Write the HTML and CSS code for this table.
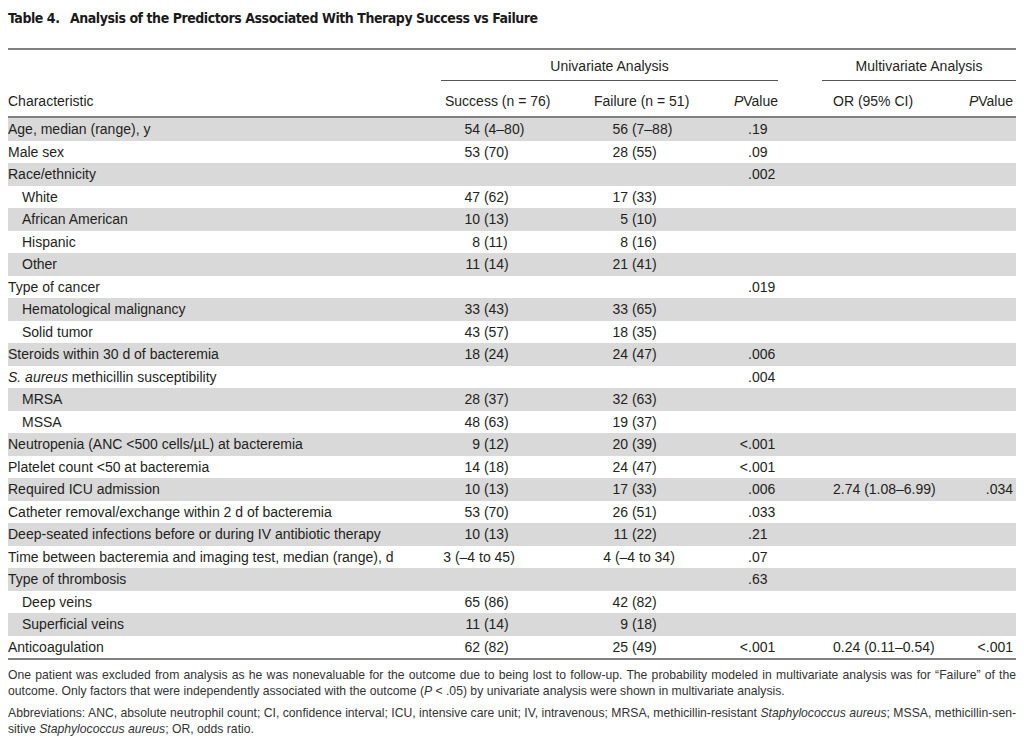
FILE: index.html
```html
<!DOCTYPE html>
<html lang="en">
<head>
<meta charset="utf-8">
<title>Table 4</title>
<link rel="stylesheet" href="styles.css">
</head>
<body>
<div class="page">
  <h1 class="title"><span class="tnum">Table 4.</span>Analysis of the Predictors Associated With Therapy Success vs Failure</h1>

  <div class="table">
    <div class="row group">
      <div class="grp uni">Univariate Analysis</div>
      <div class="grp multi">Multivariate Analysis</div>
    </div>
    <div class="row head">
      <div class="c1">Characteristic</div>
      <div class="cs hd">Success (n = 76)</div>
      <div class="cf hd">Failure (n = 51)</div>
      <div class="cp hr"><i>P</i>Value</div>
      <div class="gap"></div>
      <div class="co">OR (95% CI)</div>
      <div class="cq"><i>P</i>Value</div>
    </div>

    <div class="row sh"><div class="c1">Age, median (range), y</div><div class="cs"><span class="n">54</span> (4–80)</div><div class="cf"><span class="n">56</span> (7–88)</div><div class="cp"><span class="lt"></span>.19</div><div class="gap"></div><div class="co"></div><div class="cq"></div></div>
    <div class="row"><div class="c1">Male sex</div><div class="cs"><span class="n">53</span> (70)</div><div class="cf"><span class="n">28</span> (55)</div><div class="cp"><span class="lt"></span>.09</div><div class="gap"></div><div class="co"></div><div class="cq"></div></div>
    <div class="row sh"><div class="c1">Race/ethnicity</div><div class="cs"></div><div class="cf"></div><div class="cp"><span class="lt"></span>.002</div><div class="gap"></div><div class="co"></div><div class="cq"></div></div>
    <div class="row"><div class="c1 ind">White</div><div class="cs"><span class="n">47</span> (62)</div><div class="cf"><span class="n">17</span> (33)</div><div class="cp"></div><div class="gap"></div><div class="co"></div><div class="cq"></div></div>
    <div class="row sh"><div class="c1 ind">African American</div><div class="cs"><span class="n">10</span> (13)</div><div class="cf"><span class="n">5</span> (10)</div><div class="cp"></div><div class="gap"></div><div class="co"></div><div class="cq"></div></div>
    <div class="row"><div class="c1 ind">Hispanic</div><div class="cs"><span class="n">8</span> (11)</div><div class="cf"><span class="n">8</span> (16)</div><div class="cp"></div><div class="gap"></div><div class="co"></div><div class="cq"></div></div>
    <div class="row sh"><div class="c1 ind">Other</div><div class="cs"><span class="n">11</span> (14)</div><div class="cf"><span class="n">21</span> (41)</div><div class="cp"></div><div class="gap"></div><div class="co"></div><div class="cq"></div></div>
    <div class="row"><div class="c1">Type of cancer</div><div class="cs"></div><div class="cf"></div><div class="cp"><span class="lt"></span>.019</div><div class="gap"></div><div class="co"></div><div class="cq"></div></div>
    <div class="row sh"><div class="c1 ind">Hematological malignancy</div><div class="cs"><span class="n">33</span> (43)</div><div class="cf"><span class="n">33</span> (65)</div><div class="cp"></div><div class="gap"></div><div class="co"></div><div class="cq"></div></div>
    <div class="row"><div class="c1 ind">Solid tumor</div><div class="cs"><span class="n">43</span> (57)</div><div class="cf"><span class="n">18</span> (35)</div><div class="cp"></div><div class="gap"></div><div class="co"></div><div class="cq"></div></div>
    <div class="row sh"><div class="c1">Steroids within 30 d of bacteremia</div><div class="cs"><span class="n">18</span> (24)</div><div class="cf"><span class="n">24</span> (47)</div><div class="cp"><span class="lt"></span>.006</div><div class="gap"></div><div class="co"></div><div class="cq"></div></div>
    <div class="row"><div class="c1"><i>S. aureus</i> methicillin susceptibility</div><div class="cs"></div><div class="cf"></div><div class="cp"><span class="lt"></span>.004</div><div class="gap"></div><div class="co"></div><div class="cq"></div></div>
    <div class="row sh"><div class="c1 ind">MRSA</div><div class="cs"><span class="n">28</span> (37)</div><div class="cf"><span class="n">32</span> (63)</div><div class="cp"></div><div class="gap"></div><div class="co"></div><div class="cq"></div></div>
    <div class="row"><div class="c1 ind">MSSA</div><div class="cs"><span class="n">48</span> (63)</div><div class="cf"><span class="n">19</span> (37)</div><div class="cp"></div><div class="gap"></div><div class="co"></div><div class="cq"></div></div>
    <div class="row sh"><div class="c1">Neutropenia (ANC &lt;500 cells/µL) at bacteremia</div><div class="cs"><span class="n">9</span> (12)</div><div class="cf"><span class="n">20</span> (39)</div><div class="cp"><span class="lt">&lt;</span>.001</div><div class="gap"></div><div class="co"></div><div class="cq"></div></div>
    <div class="row"><div class="c1">Platelet count &lt;50 at bacteremia</div><div class="cs"><span class="n">14</span> (18)</div><div class="cf"><span class="n">24</span> (47)</div><div class="cp"><span class="lt">&lt;</span>.001</div><div class="gap"></div><div class="co"></div><div class="cq"></div></div>
    <div class="row sh"><div class="c1">Required ICU admission</div><div class="cs"><span class="n">10</span> (13)</div><div class="cf"><span class="n">17</span> (33)</div><div class="cp"><span class="lt"></span>.006</div><div class="gap"></div><div class="co">2.74 (1.08–6.99)</div><div class="cq">.034</div></div>
    <div class="row"><div class="c1">Catheter removal/exchange within 2 d of bacteremia</div><div class="cs"><span class="n">53</span> (70)</div><div class="cf"><span class="n">26</span> (51)</div><div class="cp"><span class="lt"></span>.033</div><div class="gap"></div><div class="co"></div><div class="cq"></div></div>
    <div class="row sh"><div class="c1">Deep-seated infections before or during IV antibiotic therapy</div><div class="cs"><span class="n">10</span> (13)</div><div class="cf"><span class="n">11</span> (22)</div><div class="cp"><span class="lt"></span>.21</div><div class="gap"></div><div class="co"></div><div class="cq"></div></div>
    <div class="row"><div class="c1">Time between bacteremia and imaging test, median (range), d</div><div class="cs rng"><span class="n">3</span> (–4 to 45)</div><div class="cf rng"><span class="n">4</span> (–4 to 34)</div><div class="cp"><span class="lt"></span>.07</div><div class="gap"></div><div class="co"></div><div class="cq"></div></div>
    <div class="row sh"><div class="c1">Type of thrombosis</div><div class="cs"></div><div class="cf"></div><div class="cp"><span class="lt"></span>.63</div><div class="gap"></div><div class="co"></div><div class="cq"></div></div>
    <div class="row"><div class="c1 ind">Deep veins</div><div class="cs"><span class="n">65</span> (86)</div><div class="cf"><span class="n">42</span> (82)</div><div class="cp"></div><div class="gap"></div><div class="co"></div><div class="cq"></div></div>
    <div class="row sh"><div class="c1 ind">Superficial veins</div><div class="cs"><span class="n">11</span> (14)</div><div class="cf"><span class="n">9</span> (18)</div><div class="cp"></div><div class="gap"></div><div class="co"></div><div class="cq"></div></div>
    <div class="row last"><div class="c1">Anticoagulation</div><div class="cs"><span class="n">62</span> (82)</div><div class="cf"><span class="n">25</span> (49)</div><div class="cp"><span class="lt">&lt;</span>.001</div><div class="gap"></div><div class="co">0.24 (0.11–0.54)</div><div class="cq">&lt;.001</div></div>
  </div>

  <div class="notes">
    <p class="note"><span class="jl">One patient was excluded from analysis as he was nonevaluable for the outcome due to being lost to follow-up. The probability modeled in multivariate analysis was for “Failure” of the</span><span class="ll">outcome. Only factors that were independently associated with the outcome (<i>P</i> &lt; .05) by univariate analysis were shown in multivariate analysis.</span></p>
    <p class="note"><span class="jl">Abbreviations: ANC, absolute neutrophil count; CI, confidence interval; ICU, intensive care unit; IV, intravenous; MRSA, methicillin-resistant <i>Staphylococcus aureus</i>; MSSA, methicillin-sen-</span><span class="ll">sitive <i>Staphylococcus aureus</i>; OR, odds ratio.</span></p>
  </div>
</div>
</body>
</html>
```

FILE: styles.css
```css
* { box-sizing: border-box; }

body {
  margin: 0;
  background: #ffffff;
  color: #231f20;
  font-family: "Liberation Sans", Arial, sans-serif;
}

.page {
  padding: 8px 8px 0 8px;
  width: 1024px;
}

.title {
  margin: 0;
  height: 20px;
  line-height: 20px;
  font-family: "DejaVu Sans Condensed", "Liberation Sans", sans-serif;
  font-stretch: condensed;
  font-weight: bold;
  font-size: 14px;
  letter-spacing: -0.45px;
  color: #1a1a1a;
  white-space: nowrap;
}

.tnum {
  display: inline-block;
  width: 62px;
}

.table {
  margin-top: 20px;
  border-top: 2px solid #808080;
  border-bottom: 2px solid #808080;
  font-size: 14px;
}

.row {
  display: grid;
  grid-template-columns: 433px 149px 140px 48px 44px 138px 56px;
  height: 22.5px;
  line-height: 22.5px;
  white-space: nowrap;
}

.row.sh { background: #d9d9d9; }

.row.group {
  height: 31px;
  line-height: 17px;
}

.grp {
  padding-top: 8px;
  height: 31px;
  text-align: center;
  border-bottom: 1px solid #555555;
}

.grp.uni { grid-column: 2 / 5; }
.grp.multi { grid-column: 6 / 8; }

.row.head {
  height: 37px;
  line-height: 17px;
  padding-top: 11.5px;
  border-bottom: 2px solid #808080;
}

.ind { padding-left: 14px; }

.hd { padding-left: 4px; }

.hr { text-align: right; }

.n {
  display: inline-block;
  text-align: right;
}

.cs .n { width: 39px; }
.cf .n { width: 38px; }
.cs.rng .n { width: 10px; }
.cf.rng .n { width: 21px; }

.lt {
  display: inline-block;
  width: 18px;
  text-align: right;
}

.co { padding-left: 11px; }

.cq {
  text-align: right;
  padding-right: 3px;
}

.notes {
  margin-top: 7px;
  font-size: 12.2px;
  line-height: 16px;
  color: #333333;
}

.note {
  margin: 0 0 6px 0;
}

.jl {
  display: block;
  text-align: justify;
  text-align-last: justify;
}

.ll {
  display: block;
  white-space: nowrap;
}
```
